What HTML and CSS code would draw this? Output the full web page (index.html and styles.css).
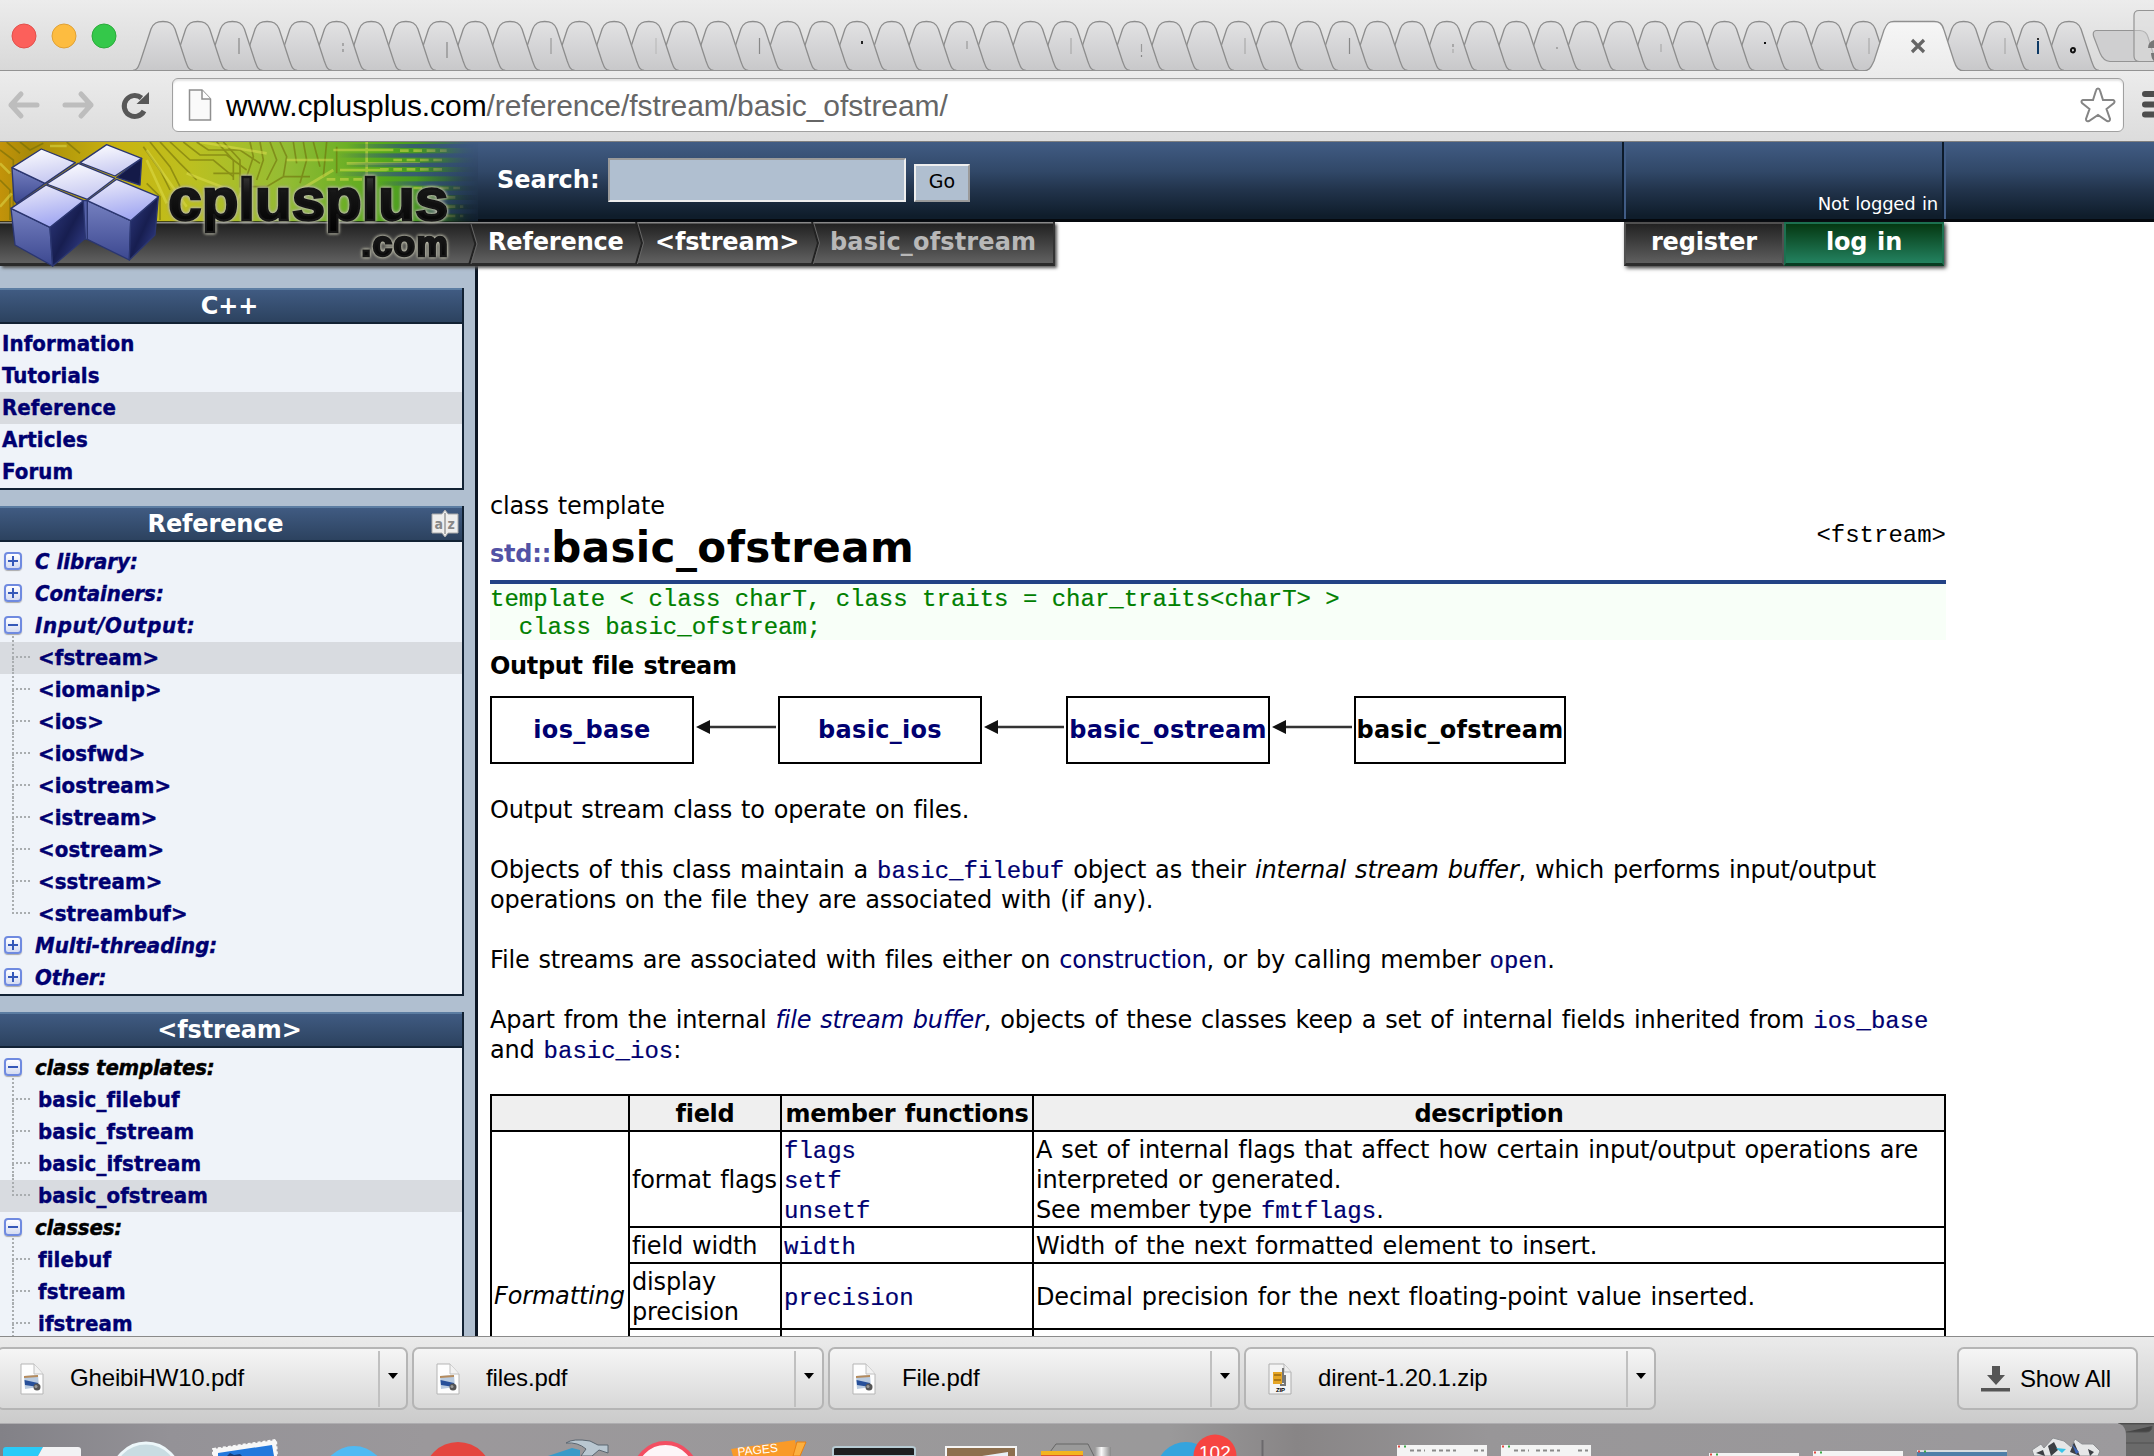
FILE: index.html
```html
<!DOCTYPE html>
<html lang="en">
<head>
<meta charset="utf-8">
<title>basic_ofstream - C++ Reference</title>
<link rel="stylesheet" href="styles.css">
</head>
<body>
<div class="window">
  <div class="tabstrip">
    <svg class="tabs" width="2154" height="72" viewBox="0 0 2154 72">
      <defs>
        <linearGradient id="tabFill" x1="0" y1="0" x2="0" y2="1"><stop offset="0" stop-color="#e2e2e3"/><stop offset="1" stop-color="#c8c8ca"/></linearGradient>
        <linearGradient id="activeFill" x1="0" y1="0" x2="0" y2="1"><stop offset="0" stop-color="#f6f6f6"/><stop offset="1" stop-color="#ececec"/></linearGradient>
      </defs>
      <circle cx="24" cy="36" r="12" fill="#fc605b" stroke="#e2504c"/>
      <circle cx="64" cy="36" r="12" fill="#fdbc40" stroke="#dfa136"/>
      <circle cx="104" cy="36" r="12" fill="#34c84a" stroke="#2bab3b"/>
      <g id="tabShapes"></g>
      <g id="tabMarks"></g>
      <path d="M0 70.5H2154" stroke="#939393"/>
      <path d="M1863 71C1870 71 1871 67 1874 61L1884 30C1887 23 1889 21.500 1894 21.500H1934C1939 21.500 1942 23 1944 30L1954 61C1956 67 1958 71 1965 71" fill="url(#activeFill)" stroke="#8f8f8f" stroke-width="1.300"/>
      <path d="M1912 40l12 12m0 -12l-12 12" stroke="#666" stroke-width="3.200"/>
      <path d="M2096 30.500H2140C2145 31 2147 33 2148 37L2154 56V61.500H2110C2105 61 2102 58 2100 53L2093.500 36Q2092.500 31 2096 30.500Z" fill="#cfcfd0" stroke="#949494" stroke-width="1.200"/>
      <path d="M2154 10.500H2139Q2134 10.500 2134 15.500V56Q2134 61 2139 61.500H2154" fill="#dcdcdc" fill-opacity=".45" stroke="#949494" stroke-width="1.200"/>
      <path d="M2154 40q-6 2 -6 8h6zM2151 53h3v8q-3-3-3-8z" fill="#777"/>
    </svg>
  </div>
  <div class="toolbar">
    <svg class="nav" width="172" height="70" viewBox="0 0 172 70">
      <g fill="none" stroke="#bdbdbd" stroke-width="5" stroke-linecap="round" stroke-linejoin="round"><path d="M21 24L11 35L21 46M11 35H37"/><path d="M81 24L91 35L81 46M91 35H65"/></g>
      <path d="M144 41a10.500 10.500 0 1 1 -2.500 -13" fill="none" stroke="#575757" stroke-width="5"/>
      <path d="M149 22V34H136.500Z" fill="#575757"/>
    </svg>
    <div class="omnibox">
      <svg width="24" height="32" viewBox="0 0 24 32"><path d="M1.500 1H14L22.500 10V31H1.500Z" fill="#fafafa" stroke="#8f8f8f" stroke-width="1.500"/><path d="M14 1V10H22.500" fill="#fff" stroke="#8f8f8f" stroke-width="1.500"/></svg>
      <span class="url">www.cplusplus.com<span class="path">/reference/fstream/basic_ofstream/</span></span>
      <svg class="star" width="38" height="38" viewBox="0 0 38 38"><path d="M19 2.500Q20.500 2.500 21 4.500L24 14L34 14Q36.500 15 35 17L27.500 23L31 33Q31 36 28 35L19 29L10 35Q7 36 7 33L10.500 23L3 17Q1.500 15 4 14L14 14L17 4.500Q17.500 2.500 19 2.500Z" fill="#fff" stroke="#858585" stroke-width="2"/></svg>
    </div>
    <svg class="menu" width="12" height="30" viewBox="0 0 12 30"><path d="M3 4H14M3 14.500H14M3 24.500H14" stroke="#4d4d4d" stroke-width="6" stroke-linecap="round"/></svg>
  </div>

  <div class="page">
    <div class="site-head">
      <div class="search">
        <label for="q">Search:</label>
        <input id="q" type="text">
        <button type="button">Go</button>
      </div>
      <div class="userbox"><span>Not logged in</span></div>
    </div>
    <div class="nav-row">
      <div class="crumbs">
        <a>Reference</a>
        <svg width="9" height="42" viewBox="0 0 9 42"><path d="M1 0L7 21L1 42" fill="none" stroke="#222" stroke-width="2"/><path d="M2.500 0L8.500 21L2.500 42" fill="none" stroke="#666"/></svg>
        <a>&lt;fstream&gt;</a>
        <svg width="9" height="42" viewBox="0 0 9 42"><path d="M1 0L7 21L1 42" fill="none" stroke="#222" stroke-width="2"/><path d="M2.500 0L8.500 21L2.500 42" fill="none" stroke="#666"/></svg>
        <span class="here">basic_ofstream</span>
      </div>
      <div class="account"><a class="register">register</a><a class="login">log in</a></div>
    </div>

    <svg class="logo" width="478" height="128" viewBox="0 6 1434 384">
      <defs>
        <linearGradient id="board" x1="0" x2="1" y1="0" y2="0"><stop offset="0" stop-color="#c3930a"/><stop offset=".06" stop-color="#a88a08"/><stop offset=".25" stop-color="#c9b410"/><stop offset=".4" stop-color="#bcc020"/><stop offset=".6" stop-color="#93bc34"/><stop offset=".8" stop-color="#55a81c"/><stop offset=".93" stop-color="#3d8a28"/><stop offset="1" stop-color="#3d8a28" stop-opacity="0"/></linearGradient>
        <linearGradient id="fadeIn" x1="0" x2="1" y1="0" y2="0"><stop offset="0" stop-color="#34557a" stop-opacity="0"/><stop offset=".5" stop-color="#34557a" stop-opacity=".85"/><stop offset="1" stop-color="#34557a"/></linearGradient>
        <linearGradient id="headFill" x1="0" x2="0" y1="0" y2="1"><stop offset="0" stop-color="#405b82"/><stop offset="1" stop-color="#0f1d2b"/></linearGradient>
        <linearGradient id="endFade" x1="0" x2="1" y1="0" y2="0"><stop offset="0" stop-color="#fff" stop-opacity="0"/><stop offset="1" stop-color="#fff"/></linearGradient>
        <mask id="endMask"><rect x="1250" y="0" width="184" height="260" fill="url(#endFade)"/></mask>
        <linearGradient id="top" x1="0" x2=".3" y1="0" y2="1"><stop offset="0" stop-color="#fff"/><stop offset="1" stop-color="#c9cbf2"/></linearGradient>
        <linearGradient id="top2" x1="0" x2=".3" y1="0" y2="1"><stop offset="0" stop-color="#f0effa"/><stop offset="1" stop-color="#a3a9f2"/></linearGradient>
        <linearGradient id="side" x1="0" x2="0" y1="0" y2="1"><stop offset="0" stop-color="#7580c0"/><stop offset="1" stop-color="#3c4890"/></linearGradient>
        <linearGradient id="dark" x1="0" x2="1" y1="0" y2="1"><stop offset="0" stop-color="#2f3a80"/><stop offset=".5" stop-color="#171e50"/><stop offset="1" stop-color="#3a4698"/></linearGradient>
        <linearGradient id="letters" x1="0" x2="0" y1="0" y2="1"><stop offset="0" stop-color="#4a4a4a"/><stop offset=".4" stop-color="#161616"/><stop offset="1" stop-color="#000"/></linearGradient>
      </defs>
      <rect x="0" y="6" width="1434" height="238" fill="url(#board)"/>
      <g fill="none" stroke="#6d6a08" stroke-width="5" opacity=".55">
        <path d="M430 20L480 90L510 150M450 6L510 80L540 140M480 6L540 70L590 120M510 6L570 60H640L700 110M550 6L600 45H680L740 90M590 6L625 30H720L780 70M0 30L40 60V200M20 6L60 40M0 120L30 150V240M60 6L90 30L130 10M200 6L240 40M440 130L480 170V240"/>
        <path d="M650 6L700 60V120M670 6L720 60V110M750 6L760 50L740 110M780 6L790 60L770 120M810 6L830 60L800 120M840 6L860 50L850 110M880 6L890 70M910 6L920 60L900 130M940 6L960 80M980 6L970 110M1010 20V100M640 100H720V140H800L850 110H930"/>
      </g>
      <g fill="none" stroke="#dfe04e" stroke-width="8" opacity=".5"><path d="M440 60L500 190M440 30L560 200M560 100L690 150M600 6L800 40M700 200L740 130M0 70L30 100M0 200L35 160M860 60H1000M900 150L1000 90M1000 30H1180M1040 70H1260M1020 90H1160M1100 6V140M150 18H200"/><path d="M980 118H1100M1180 60H1330M1200 32H1340M1140 88H1340M1240 144H1380M1340 172H1380M1340 200H1390M1340 228H1390" stroke-dasharray="26 14"/></g>
      <g fill="url(#fadeIn)"><rect x="1040" y="12" width="394" height="12"/><rect x="1010" y="40" width="424" height="13"/><rect x="1030" y="68" width="404" height="13"/><rect x="1000" y="96" width="434" height="13"/><rect x="1130" y="124" width="304" height="13"/><rect x="1240" y="152" width="194" height="13"/><rect x="1240" y="180" width="194" height="13"/><rect x="1240" y="208" width="194" height="13"/></g>
      <rect x="1250" y="6" width="184" height="238" fill="url(#headFill)" mask="url(#endMask)"/>
      <g stroke="#2b3670" stroke-width="4" stroke-linejoin="round">
        <path d="M36 83L135 130L50 190L42 180Z" fill="url(#side)"/>
        <path d="M425 55L420 135L350 112Z" fill="#141a48"/>
        <path d="M36 83L124 27L226 68L135 130Z" fill="url(#top)"/>
        <path d="M240 68L320 14L425 55L345 108Z" fill="url(#top)"/>
        <path d="M140 132L235 70L345 115L262 178Z" fill="url(#top)"/>
        <path d="M250 182H264V298H250Z" fill="#5561a8"/>
        <path d="M33 205L150 262L158 378L45 315Z" fill="url(#side)"/>
        <path d="M150 262L250 182L256 295L158 378Z" fill="url(#dark)"/>
        <path d="M33 205L138 135L250 182L150 262Z" fill="url(#top2)"/>
        <path d="M262 182L392 242L388 360L262 298Z" fill="url(#side)"/>
        <path d="M392 242L475 170L465 285L388 360Z" fill="url(#dark)"/>
        <path d="M262 182L350 118L475 170L392 242Z" fill="url(#top2)"/>
      </g>
      <g class="logo-text">
        <text x="505" y="239" font-size="180" textLength="840">cplusplus</text>
        <text x="1084" y="347" font-size="106" textLength="260">.com</text>
      </g>
      <path d="M1408 252L1426 312L1408 372" fill="none" stroke="#222" stroke-width="6"/><path d="M1413 252L1431 312L1413 372" fill="none" stroke="#666" stroke-width="3"/>
    </svg>

    <div class="body">
      <div class="sidebar">
        <div class="box">
          <div class="box-title"><span>C++</span></div>
          <ul class="plain">
            <li>Information</li><li>Tutorials</li><li class="on">Reference</li><li>Articles</li><li>Forum</li>
          </ul>
        </div>
        <div class="box">
          <div class="box-title"><span>Reference</span>
            <svg width="28" height="28" viewBox="0 0 28 28"><path d="M1 4H11L14 0L17 4H27V23H17L14 27L11 23H1Z" fill="#eee" stroke="#aaa"/><path d="M14 3V24" stroke="#999" stroke-width="1.500"/><text x="3.500" y="19" class="az">a</text><text x="16.500" y="19" class="az">z</text></svg>
          </div>
          <ul class="tree">
            <li class="cat plus">C library:</li>
            <li class="cat plus">Containers:</li>
            <li class="cat minus io">Input/Output:</li>
            <li class="sub on">&lt;fstream&gt;</li>
            <li class="sub">&lt;iomanip&gt;</li>
            <li class="sub">&lt;ios&gt;</li>
            <li class="sub">&lt;iosfwd&gt;</li>
            <li class="sub">&lt;iostream&gt;</li>
            <li class="sub">&lt;istream&gt;</li>
            <li class="sub">&lt;ostream&gt;</li>
            <li class="sub">&lt;sstream&gt;</li>
            <li class="sub end">&lt;streambuf&gt;</li>
            <li class="cat plus">Multi-threading:</li>
            <li class="cat plus">Other:</li>
          </ul>
        </div>
        <div class="box">
          <div class="box-title"><span>&lt;fstream&gt;</span></div>
          <ul class="tree">
            <li class="cat minus black">class templates:</li>
            <li class="sub">basic_filebuf</li>
            <li class="sub">basic_fstream</li>
            <li class="sub">basic_ifstream</li>
            <li class="sub end on">basic_ofstream</li>
            <li class="cat minus black">classes:</li>
            <li class="sub">filebuf</li>
            <li class="sub">fstream</li>
            <li class="sub">ifstream</li>
          </ul>
        </div>
      </div>

      <div class="content">
        <div class="kind">class template</div>
        <div class="title-row">
          <h1><span class="ns">std::</span>basic_ofstream</h1>
          <code class="header-name">&lt;fstream&gt;</code>
        </div>
        <pre>template &lt; class charT, class traits = char_traits&lt;charT&gt; &gt;
  class basic_ofstream;</pre>
        <div class="lead">Output file stream</div>
        <div class="diagram">
          <div class="node">ios_base</div>
          <svg width="84" height="16" viewBox="0 0 84 16"><path d="M12 8H82" stroke="#333" stroke-width="2.500"/><path d="M2 8L16 1V15Z" fill="#111"/></svg>
          <div class="node">basic_ios</div>
          <svg width="84" height="16" viewBox="0 0 84 16"><path d="M12 8H82" stroke="#333" stroke-width="2.500"/><path d="M2 8L16 1V15Z" fill="#111"/></svg>
          <div class="node">basic_ostream</div>
          <svg width="84" height="16" viewBox="0 0 84 16"><path d="M12 8H82" stroke="#333" stroke-width="2.500"/><path d="M2 8L16 1V15Z" fill="#111"/></svg>
          <div class="node self">basic_ofstream</div>
        </div>
        <p>Output stream class to operate on files.</p>
        <p>Objects of this class maintain a <code>basic_filebuf</code> object as their <i>internal stream buffer</i>, which performs input/output<br>operations on the file they are associated with (if any).</p>
        <p>File streams are associated with files either on <a>construction</a>, or by calling member <code>open</code>.</p>
        <p>Apart from the internal <a><i>file stream buffer</i></a>, objects of these classes keep a set of internal fields inherited from <code>ios_base</code><br>and <code>basic_ios</code>:</p>
        <table>
          <colgroup><col class="c1"><col class="c2"><col class="c3"><col class="c4"></colgroup>
          <tr><th></th><th>field</th><th>member functions</th><th>description</th></tr>
          <tr><td rowspan="4"><i>Formatting</i></td><td>format flags</td><td><code>flags</code><br><code>setf</code><br><code>unsetf</code></td><td>A set of internal flags that affect how certain input/output operations are<br>interpreted or generated.<br>See member type <code>fmtflags</code>.</td></tr>
          <tr><td>field width</td><td><code>width</code></td><td>Width of the next formatted element to insert.</td></tr>
          <tr><td>display<br>precision</td><td><code>precision</code></td><td>Decimal precision for the next floating-point value inserted.</td></tr>
          <tr class="tall"><td></td><td></td><td></td></tr>
        </table>
      </div>
    </div>
  </div>

  <div class="shelf">
    <svg class="defs" width="0" height="0">
      <defs>
        <symbol id="pdf" viewBox="0 0 24 32"><path d="M1 1H14L23 11V31H1Z" fill="#fdfdfd" stroke="#b5b5b5"/><path d="M14 1V11H23" fill="#f2f2f2" stroke="#c0c0c0"/><path d="M4 13L18 12L19 24L5 26Z" fill="#b9cbe0"/><path d="M4 13L18 12V14L4 15Z" fill="#b58b5c"/><path d="M4.500 17L18 20V24L5 22Z" fill="#27509a"/><circle cx="17" cy="24" r="3.500" fill="#555"/><circle cx="16" cy="23.500" r="1.500" fill="#999"/></symbol>
        <symbol id="zip" viewBox="0 0 24 32"><path d="M1 1H16L23 9V31H1Z" fill="#f4f4f4" stroke="#adadad"/><path d="M16 1V9H23" fill="#eee" stroke="#b5b5b5"/><path d="M5 9H14V21H5Z" fill="#e5a524"/><path d="M6 12H13M6 17H13" stroke="#9a6a10" stroke-width="1.500"/><path d="M15 5V20M17 12V22H12" stroke="#777" stroke-width="2" fill="none"/><text x="8" y="29" class="ziptext">ZIP</text></symbol>
      </defs>
    </svg>
    <div class="dl first"><svg width="24" height="32"><use href="#pdf"/></svg><span>GheibiHW10.pdf</span><b></b></div>
    <div class="dl"><svg width="24" height="32"><use href="#pdf"/></svg><span>files.pdf</span><b></b></div>
    <div class="dl"><svg width="24" height="32"><use href="#pdf"/></svg><span>File.pdf</span><b></b></div>
    <div class="dl"><svg width="24" height="32"><use href="#zip"/></svg><span>dirent-1.20.1.zip</span><b></b></div>
    <div class="showall"><svg width="30" height="26" viewBox="0 0 30 26"><path d="M11 0H19V9H24L15 19L6 9H11Z M0 22H29V25.500H0Z" fill="#555"/></svg><span>Show All</span></div>
  </div>

  <svg class="dock" width="2154" height="33" viewBox="0 1423 2154 33">
    <defs>
      <linearGradient id="dockFill" x1="0" x2="1" y1="0" y2="0"><stop offset="0" stop-color="#828187"/><stop offset=".08" stop-color="#949297"/><stop offset=".2" stop-color="#9b989b"/><stop offset=".55" stop-color="#9a999a"/><stop offset=".61" stop-color="#888586"/><stop offset=".7" stop-color="#989698"/><stop offset="1" stop-color="#9c9a9d"/></linearGradient>
      <linearGradient id="metal" x1="0" x2="1" y1="0" y2="0"><stop offset="0" stop-color="#999"/><stop offset=".4" stop-color="#fafafa"/><stop offset="1" stop-color="#888"/></linearGradient>
    </defs>
    <rect x="0" y="1423" width="2154" height="33" fill="#6a6a6a"/>
    <path d="M2120 1423H2154V1424H2120ZM2126 1432H2146Q2152 1432 2152 1426M2126 1443H2154" fill="#444" stroke="#505050"/>
    <path d="M0 1423H2116Q2126 1424 2126 1436V1456H0Z" fill="url(#dockFill)"/>
    <path d="M0 1423.500H2118" stroke="#aeadb0"/>
    <path d="M3 1450Q3 1447 6 1447H43L38 1456H3Z" fill="#2acbf8"/><path d="M43 1447H78Q81 1447 81 1450V1456H38Z" fill="#f2f2f4"/>
    <circle cx="146" cy="1477" r="34" fill="#c9dce2" stroke="#edf7fa" stroke-width="3"/>
    <path d="M213 1449L276 1440L277 1456H213Z" fill="#f7f7f7" stroke="#f7f7f7" stroke-width="2" stroke-dasharray="3 2"/><path d="M218 1453L272 1445L274 1456H218Z" fill="#2378dc"/><path d="M227 1456l3-3 4 2 6-1 2 2z" fill="#153d78"/>
    <circle cx="354" cy="1478" r="32" fill="#50baf3"/>
    <circle cx="458" cy="1476" r="34" fill="#e4453e"/>
    <path d="M548 1456L572 1448L580 1450V1456Z" fill="#3a9ac8"/><path d="M566 1443Q573 1438 590 1441L598 1445L608 1445V1453L599 1450L592 1456H581L586 1449Q578 1442 566 1443Z" fill="#b9c7d1" stroke="#5b6670"/>
    <circle cx="665.500" cy="1474" r="31" fill="#fdf5f8" stroke="#f34e62" stroke-width="4"/>
    <path d="M731 1449L795 1440L798 1456H733Z" fill="#f99a28"/><path d="M797 1442l9 0-6 14h-7z" fill="#fbb040" stroke="#e77f12"/><text x="738" y="1456" class="pages" transform="rotate(-6 738 1456)">PAGES</text>
    <path d="M833 1456V1449Q833 1447 836 1447H912Q915 1447 915 1449V1456Z" fill="#1e1f20" stroke="#b7cbd3" stroke-width="2"/>
    <rect x="946" y="1447" width="70" height="12" fill="#8d6f4e" stroke="#f5f5f5" stroke-width="2"/><path d="M982 1456L1008 1452V1456Z" fill="#e8f0f6"/>
    <path d="M1050 1452L1056 1444H1088L1094 1456" fill="#9a9a9a" stroke="#666"/><rect x="1041" y="1451" width="42" height="5" fill="#f3b51f"/><path d="M1041 1455.500H1083" stroke="#db582a"/><rect x="1095" y="1447" width="16" height="9" fill="url(#metal)"/>
    <circle cx="1186" cy="1472" r="30" fill="#35a4dd"/>
    <circle cx="1215" cy="1456" r="21.500" fill="#f64541"/><text x="1199" y="1459" class="badge">102</text>
    <path d="M1262.500 1440V1456" stroke="#6b696c" stroke-width="2"/>
    <g fill="#f4f4f4"><rect x="1397" y="1445" width="90" height="11"/><rect x="1501" y="1445" width="90" height="11"/><rect x="1709" y="1453" width="90" height="3"/><rect x="1813" y="1451" width="90" height="5"/></g>
    <path d="M1917 1450H2007V1456H1917Z" fill="#4f7fa8"/><path d="M1917 1451H2007" stroke="#d8dde0" stroke-width="2"/>
    <g stroke="#8a8a8a" stroke-width="2" stroke-dasharray="4 3"><path d="M1410 1450.500H1425M1432 1450.500H1456M1474 1450.500H1484M1514 1450.500H1529M1536 1450.500H1560M1578 1450.500H1588"/></g>
    <g stroke-width="2"><path d="M1398 1446.500H1400M1502 1446.500H1504M1710 1454.500H1712M1814 1452.500H1816M1918 1451.500H1920" stroke="#e2463f"/><path d="M1404 1446.500H1406M1508 1446.500H1510M1716 1454.500H1718M1820 1452.500H1822M1924 1451.500H1926" stroke="#3aa845"/></g>
    <path d="M2034 1456L2032 1450L2041 1444L2044 1448L2053 1438L2064 1441L2071 1447L2075 1439L2082 1444L2093 1444L2100 1451L2098 1456Z" fill="#e6e7e8" stroke="#8d8f92"/><path d="M2048 1446L2054 1442L2058 1450L2051 1456ZM2070 1452L2074 1442L2080 1456ZM2036 1453l7-3 2 6zM2088 1449l6 3-4 4z" fill="#3c3f44"/><path d="M2056 1448L2066 1449L2062 1453Z" fill="#39c4e8"/><path d="M2072 1444l7 8-3 2z" fill="#3c63b5"/>
  </svg>
</div>
<script src="tabs.js"></script>
</body>
</html>
```
FILE: styles.css
```css
*, *::before, *::after { box-sizing: border-box; }
body { margin: 0; overflow: hidden; font-family: "DejaVu Sans", Verdana, sans-serif; font-size: 24px; line-height: 30px; letter-spacing: -0.16px; word-spacing: 1.6px; color: #000; background: #fff; }
svg { display: block; flex: none; }
.window { width: 2154px; height: 1456px; display: flex; flex-direction: column; overflow: hidden; }

/* browser chrome */
.tabstrip { height: 71px; flex: none; background: linear-gradient(#ececec, #d8d8d8); }
.toolbar { height: 71px; flex: none; display: flex; background: linear-gradient(#ececec, #dcdcdc); border-bottom: 1px solid #7f7f7f; }
.nav { margin-top: -1px; }
.omnibox { width: 1952px; height: 54px; margin-top: 7px; display: flex; align-items: center; padding: 0 6px 0 15px; background: #fff; border: 1.5px solid #a0a0a0; border-radius: 6px; box-shadow: inset 0 2px 2px #e4e4e4; }
.url { flex: 1; margin-left: 14px; padding-top: 2px; font: 30px/36px "Liberation Sans", Arial, sans-serif; letter-spacing: -0.07px; word-spacing: 0; color: #000; }
.url .path { color: #666; }
.menu { margin: 19px 0 0 18px; }

/* page */
.page { height: 1194px; flex: none; overflow: hidden; position: relative; }
.site-head { height: 80px; display: flex; justify-content: space-between; background: linear-gradient(#415c84, #314868 38%, #22344c 62%, #0f1d2b 96%); border-bottom: 3px solid #05090e; padding: 0 210px 0 497px; }
.search { display: flex; align-items: flex-end; padding-bottom: 17px; }
.search label { font-weight: bold; color: #fff; line-height: 44px; letter-spacing: 0; width: 111px; }
.search input { width: 298px; height: 44px; border: 2px solid; border-color: #9a9a9a #eee #eee #9a9a9a; background: #b0bfd0; padding: 0; }
.search button { width: 56px; height: 38px; margin-left: 8px; border: 2px solid; border-color: #eee #9a9a9a #9a9a9a #eee; background: #b0bfd0; font: 19px "DejaVu Sans", sans-serif; padding: 0 0 4px; color: #000; }
.userbox { width: 322px; border-left: 2px solid #0d1b2b; border-right: 2px solid #0d1b2b; display: flex; align-items: flex-end; justify-content: flex-end; padding: 0 4px 3px 0; color: #fff; font-size: 18px; box-shadow: inset 2px 0 #405c86, 2px 0 #405c86; letter-spacing: -0.2px; word-spacing: 1px; }
.userbox span { line-height: 24px; }
.nav-row { height: 44px; display: flex; justify-content: space-between; padding-right: 210px; position: relative; z-index: 1; }
.crumbs { width: 1055px; display: flex; padding-left: 488px; gap: 12px; background: linear-gradient(#888 0 1px, #222 2px, #5f5f5f 40px); border-right: 2px solid #333; border-bottom: 3px solid #2a2a2a; box-shadow: 2px 2px 3px #555; color: #fff; font-weight: bold; line-height: 40px; }
.crumbs a { width: 143px; text-indent: -1px; }
.crumbs a:first-child { width: 135px; text-indent: 0; }
.here { color: #b8b8b8; letter-spacing: 0.15px; margin-left: -2px; }
.account { display: flex; width: 320px; color: #fff; font-weight: bold; line-height: 36px; text-align: center; box-shadow: 2px 2px 4px #333; }
.account a { flex: 1; border: 2px solid #505050; border-bottom: 3px solid #2c2c2c; background: linear-gradient(#222, #5f5f5f); }
.account .login { border-color: #1c7050; border-bottom-color: #083c22; background: linear-gradient(#053812, #238260); }
.logo { position: absolute; left: 0; top: 0; z-index: 2; }
.logo-text { font-family: "Liberation Sans", Arial, sans-serif; font-weight: bold; fill: url(#letters); stroke: #151515; stroke-width: 7px; letter-spacing: 0; filter: drop-shadow(0 0 4px #d8d8c8) drop-shadow(0 0 4px #9a9a88); }

.body { display: flex; height: 1070px; }
.sidebar { width: 478px; flex: none; background: #b0bfd0; border-right: 3px solid #0c1624; padding-top: 22px; }
.box { width: 464px; margin-bottom: 16px; border-right: 2px solid #122234; border-bottom: 2px solid #122234; background: #eff3f9; font: bold 22px/32px "DejaVu Sans Condensed", "DejaVu Sans", Tahoma, sans-serif; font-stretch: condensed; letter-spacing: 0; word-spacing: 0; color: #000070; }
.box ul { list-style: none; margin: 0; padding: 4px 0 0; -webkit-text-stroke: 0.4px currentColor; }
.box-title { height: 36px; display: flex; align-items: center; padding: 0 3px 1px 0; border-top: 2px solid #5c7da2; border-bottom: 2px solid #122234; background: linear-gradient(#405b82, #2c425f); color: #fff; font: bold 24px/30px "DejaVu Sans", sans-serif; letter-spacing: -0.15px; }
.box-title span { flex: 1; text-align: center; }
.az { font: bold 14px "DejaVu Sans Condensed", sans-serif; fill: #888; }
.box li { height: 32px; padding-left: 2px; }
.plain li { letter-spacing: 0.1px; }
.box .on { background: #d8dbe0; }
.tree .cat { padding-left: 35px; font-style: italic; position: relative; }
.tree .io { letter-spacing: 0.6px; }
.tree .black { color: #000; letter-spacing: -0.2px; }
.cat::before { content: ""; position: absolute; left: 4px; top: 6px; width: 18px; height: 18px; border: 2px solid #6f8ae0; border-radius: 4px; background: linear-gradient(#3558b8, #3558b8) center / 10px 2px no-repeat, linear-gradient(#fff, #d5dcf2); box-shadow: 0 1px 1px #aaa; }
.plus::before { background: linear-gradient(#3558b8, #3558b8) center / 10px 2px no-repeat, linear-gradient(#3558b8, #3558b8) center / 2px 10px no-repeat, linear-gradient(#fff, #d5dcf2); }
.tree .sub { padding-left: 38px; position: relative; letter-spacing: 0.12px; }
.sub::before { content: ""; position: absolute; left: 12px; top: -6px; width: 18px; height: 22px; border-left: 2px dotted #a9adb0; border-bottom: 2px dotted #a9adb0; }
.sub::after { content: ""; position: absolute; left: 12px; top: 16px; height: 16px; border-left: 2px dotted #a9adb0; }
.sub.end::after { display: none; }

.content { width: 1468px; padding: 225px 0 0 12px; }
.title-row { display: flex; justify-content: space-between; height: 63px; border-bottom: 4px solid #234385; }
h1 { margin: 0; font-size: 42px; line-height: 53px; letter-spacing: 0.42px; }
.ns { font-size: 24px; letter-spacing: -0.2px; color: #5252a5; }
code, pre { font-family: "Liberation Mono", "Courier New", monospace; font-size: 24px; letter-spacing: 0; word-spacing: 0; color: #000070; -webkit-text-stroke: 0.2px currentColor; }
code { line-height: 20px; }
.header-name { color: #000; line-height: 30px; -webkit-text-stroke-width: 0; }
pre { margin: 0; line-height: 28px; height: 56px; padding-top: 2px; background: #f8fff8; color: #008000; }
.lead { font-weight: bold; margin-top: 11px; letter-spacing: -0.35px; }
.diagram { display: flex; align-items: center; margin: 15px 0 31px; }
.node { width: 204px; height: 68px; flex: none; border: 2px solid #000; font-weight: bold; line-height: 65px; text-align: center; letter-spacing: 0.3px; color: #000070; white-space: nowrap; }
.node.self { width: 212px; color: #000; letter-spacing: 0.2px; }
.diagram svg { margin-top: -6px; }
p { margin: 0 0 30px; white-space: nowrap; letter-spacing: -0.17px; word-spacing: 1.5px; }
a { color: #000070; }
.crumbs a, .account a { color: inherit; }
table { width: 1456px; margin-top: -1px; table-layout: fixed; border-collapse: collapse; }
.c1 { width: 138px; } .c2 { width: 152px; } .c3 { width: 252px; }
th, td { border: 2px solid #000; padding: 3px 2px 1px; height: 36px; text-align: left; white-space: nowrap; }
th { background: #efefef; text-align: center; letter-spacing: -0.3px; }
.tall td { height: 130px; }

/* downloads and dock */
.shelf { height: 87px; flex: none; display: flex; align-items: flex-start; padding-top: 10px; border-top: 1.5px solid #8a8a8a; background: linear-gradient(#ebebeb, #cbcbcb); font: 24px/30px "Liberation Sans", Arial, sans-serif; letter-spacing: -0.15px; word-spacing: 0; }
.defs { position: absolute; }
.dl { width: 412px; height: 63px; margin-right: 4px; flex: none; display: flex; align-items: center; padding-left: 22px; border: 2px solid #b5b5b5; border-radius: 7px; background: linear-gradient(#f5f5f5, #d8d8d8); }
.dl.first { margin-left: -4px; }
.dl span { flex: 1; margin-left: 26px; padding-bottom: 1px; }
.dl b { width: 28px; height: 56px; border-left: 2px solid #c0c0c0; display: flex; align-items: center; justify-content: center; }
.dl b::after { content: ""; border: 5px solid transparent; border-top: 6px solid #000; border-bottom: 0; margin-top: -5px; }
.showall { width: 181px; height: 63px; margin: 0 16px 0 auto; display: flex; align-items: center; gap: 9px; padding-left: 22px; border: 2px solid #b5b5b5; border-radius: 7px; background: linear-gradient(#f5f5f5, #d8d8d8); }
.ziptext { font: bold 6px "Liberation Sans", sans-serif; }
.dock text { letter-spacing: 0; word-spacing: 0; }
.pages { font: 12px "Liberation Sans", sans-serif; fill: #fff; }
.badge { font: 19px "Liberation Sans", sans-serif; fill: #fff; }
```
FILE: tabs.js
```js
// Draws the stacked background tabs, right to left so each tab overlaps the next one.
(function () {
  var ns = "http://www.w3.org/2000/svg";
  function add(parent, attrs) {
    var p = document.createElementNS(ns, "path");
    for (var k in attrs) p.setAttribute(k, attrs[k]);
    parent.appendChild(p);
  }
  var shapes = document.getElementById("tabShapes");
  var centers = [];
  for (var n = 0; n < 50; n++) centers.push(163 + n * 34.7);
  [1963.7, 1999, 2034, 2069].forEach(function (c) { centers.push(c); });
  centers.reverse().forEach(function (c) {
    add(shapes, {
      d: "M-30 70.500C-25 70 -24.500 66 -22.500 61L-12 29C-9.500 23 -6 21.500 0 21.500C6 21.500 9.500 23 12 29L22.500 61C24.500 66 25 70 30 70.500",
      transform: "translate(" + c + ")",
      fill: "url(#tabFill)", stroke: "#8d8d8d", "stroke-width": 1.3
    });
  });
  var marks = document.getElementById("tabMarks");
  [[239, 38, 54, "#888"], [343, 43, 46, "#888"], [343, 49, 52, "#888"], [447, 42, 58, "#888"], [551, 38, 54, "#999"],
   [656, 38, 54, "#bbb"], [759.5, 38, 54, "#888"], [862, 41, 44, "#222"], [967, 41, 49, "#999"], [1071, 38, 54, "#aaa"],
   [1141.5, 44, 52, "#999"], [1141.5, 55, 57, "#888"], [1245, 38, 54, "#aaa"], [1349.5, 38, 54, "#888"],
   [1453, 44, 47, "#888"], [1453, 49, 53, "#aaa"], [1557, 47, 49, "#888"], [1661, 44, 52, "#aaa"], [1765, 42, 44, "#111"],
   [1869, 38, 54, "#aaa"], [2005, 38, 54, "#aaa"], [2038, 41, 54, "#0d3a66"], [2038, 38, 40, "#333"]
  ].forEach(function (m) {
    add(marks, { d: "M" + m[0] + " " + m[1] + "V" + m[2], stroke: m[3], "stroke-width": m[3].charAt(1) < "4" ? 2 : 1.2 });
  });
  add(marks, { d: "M2073 48a2 2.200 0 1 1 -.1 4.400a2 2.200 0 1 1 .1 -4.400", fill: "none", stroke: "#111", "stroke-width": 2 });
})();
```
